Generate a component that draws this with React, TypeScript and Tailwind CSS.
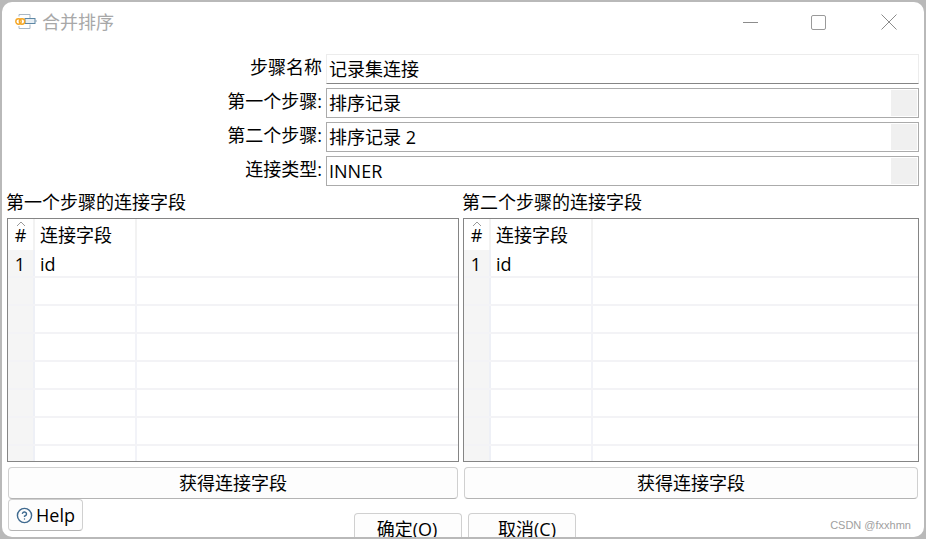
import { CircleHelp } from "lucide-react";

const FONT = "font-['Open_Sans','Noto_Sans_CJK_SC',sans-serif]";

function FormRow({ label, value, combo }: { label: string; value: string; combo?: boolean }) {
  return (
    <div className="flex h-[30px] items-center">
      <div className="w-[314px] pb-[4px] pr-[3px] text-right leading-[26px]">{label}</div>
      <div
        className={`flex h-[30px] w-[593px] items-center border ml-px ${
          combo ? "border-[#ababab]" : "border-[#ececec] border-b-[#858585]"
        }`}
      >
        <span className="flex-1 pl-[2px]">{value}</span>
        {combo && <span className="mr-px h-[26px] w-[26px] bg-[#f0f0f0]" />}
      </div>
    </div>
  );
}

function FieldTable({ title, w }: { title: string; w: string }) {
  const rows = [0, 1, 2, 3, 4, 5, 6, 7];
  return (
    <div className={w}>
      <div className="-ml-px h-[26px] leading-[20px]">{title}</div>
      <div className="h-[244px] overflow-hidden border border-[#858585]">
        <div className="flex h-[31px]">
          <div className="relative flex w-[27px] shrink-0 justify-center border-r-2 border-[#f2f2f2] pt-[3px] leading-[26px]">
            #
            <svg className="absolute left-[8px] top-[2px]" width="10" height="6" viewBox="0 0 10 6" fill="none">
              <path d="M1 5 5 1l4 4" stroke="#9a9a9a" />
            </svg>
          </div>
          <div className="w-[102px] shrink-0 border-r-2 border-[#f2f2f2] pl-[5px] pt-[3px] leading-[26px]">连接字段</div>
        </div>
        {rows.map((r) => (
          <div key={r} className="flex h-[28px] border-b-2 border-[#f3f3f6]">
            <div className="w-[27px] shrink-0 border-r-2 border-[#eef0f6] bg-[#f5f5f5] pr-[8px] pt-px text-right leading-[26px]">
              {r === 0 ? "1" : ""}
            </div>
            <div className="w-[102px] shrink-0 border-r-2 border-[#f2f3f8] pl-[5px] pt-px leading-[26px]">{r === 0 ? "id" : ""}</div>
          </div>
        ))}
      </div>
    </div>
  );
}

function Btn({ children, cls }: { children: React.ReactNode; cls: string }) {
  return (
    <div className={`flex items-center justify-center rounded-[4px] border border-[#d0d0d0] border-b-[#b4b4b4] bg-[#fdfdfd] ${cls}`}>
      {children}
    </div>
  );
}

export default function App() {
  return (
    <div className={`h-[539px] w-[926px] overflow-hidden bg-[#b9b9b9] pt-[2px] pl-[2px] text-[18px] text-black ${FONT}`}>
      <div className="relative h-[535px] w-[922px] overflow-hidden rounded-[10px] bg-white">
        {/* title bar */}
        <div className="flex h-[40px] items-center">
          <svg className="ml-[12px]" width="24" height="18" viewBox="0 0 24 18" fill="none">
            <path d="M5 3.5V1.5h11v4M5 13v2.5h11v-4" stroke="#a9b8c6" />
            <rect x="11" y="5.5" width="10" height="5" fill="#e6eef4" stroke="#5d87a5" />
            <path d="M21 8h2" stroke="#8aa4b8" />
            <circle cx="4.5" cy="8.5" r="2.7" stroke="#f5a623" strokeWidth="1.4" />
            <circle cx="8" cy="8.5" r="2.7" stroke="#f5a623" strokeWidth="1.4" />
          </svg>
          <span className="ml-[4px] text-[#a8a8a8]">合并排序</span>
          <div className="ml-auto flex items-center">
            <span className="mr-[53px] h-px w-[15px] bg-[#8c8c8c]" />
            <span className="mr-[55px] h-[15px] w-[15px] rounded-[2px] border-[1.5px] border-[#9a9a9a]" />
            <svg className="mr-[27px]" width="16" height="16" viewBox="0 0 16 16" fill="none">
              <path d="M.5.5l15 15M15.500.5l-15 15" stroke="#8c8c8c" />
            </svg>
          </div>
        </div>

        {/* step form */}
        <div className="mt-[12px] flex flex-col gap-[4px] pl-[9px]">
          <FormRow label="步骤名称" value="记录集连接" />
          <FormRow label="第一个步骤:" value="排序记录" combo />
          <FormRow label="第二个步骤:" value="排序记录 2" combo />
          <FormRow label="连接类型:" value="INNER" combo />
        </div>

        {/* field tables */}
        <div className="mt-[6px] flex gap-[4px] pl-[5px]">
          <FieldTable title="第一个步骤的连接字段" w="w-[452px]" />
          <FieldTable title="第二个步骤的连接字段" w="w-[456px]" />
        </div>

        {/* get fields buttons */}
        <div className="mt-[5px] flex gap-[6px] pl-[6px]">
          <Btn cls="h-[32px] w-[450px]">获得连接字段</Btn>
          <Btn cls="h-[32px] w-[454px]">获得连接字段</Btn>
        </div>

        {/* footer */}
        <div className="flex pl-[6px]">
          <Btn cls="h-[32px] w-[75px] gap-[3px]">
            <CircleHelp size={17} color="#3f6a8f" strokeWidth={2} />
            Help
          </Btn>
          <div className="ml-[271px] mt-[14px] flex gap-[6px]">
            <Btn cls="h-[34px] w-[108px] pr-[2px] pb-[2px]">确定(O)</Btn>
            <Btn cls="h-[34px] w-[108px] pl-[10px] pb-[2px]">取消(C)</Btn>
          </div>
        </div>

        <span className="absolute bottom-[4px] right-[13px] font-['Liberation_Sans',sans-serif] text-[11px] text-[#a0a0a0]">
          CSDN @fxxhmn
        </span>
      </div>
    </div>
  );
}
